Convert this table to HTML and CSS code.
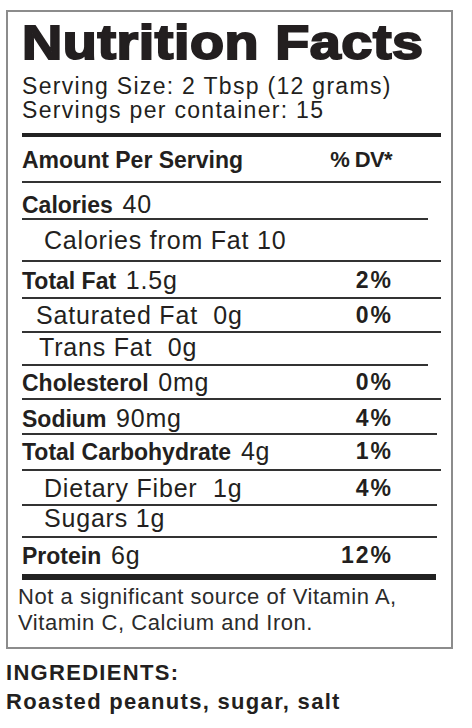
FILE: index.html
```html
<!DOCTYPE html>
<html lang="en">
<head>
  <meta charset="UTF-8" />
  <meta name="viewport" content="width=device-width, initial-scale=1.0"/>
  <title>Nutrition Facts</title>
  <link rel="stylesheet" href="styles.css">
</head>
<body>
<div class="label">
  <h1 class="title">Nutrition Facts</h1>
  <p class="serving">Serving Size: 2 Tbsp (12 grams)</p>
  <p class="serving">Servings per container: 15</p>

  <div class="row head">
    <span class="name">Amount Per Serving</span>
    <span class="dv">% DV*</span>
  </div>
  <div class="row cal short">
    <span><b>Calories</b> 40</span>
  </div>
  <div class="row cff">
    <span class="sub">Calories from Fat 10</span>
  </div>
  <div class="row tf">
    <span><b>Total Fat</b> 1.5g</span>
    <span class="pct">2%</span>
  </div>
  <div class="row sf">
    <span class="sub sub-sat">Saturated Fat&nbsp; 0g</span>
    <span class="pct">0%</span>
  </div>
  <div class="row trans short">
    <span class="sub sub-trans">Trans Fat&nbsp; 0g</span>
  </div>
  <div class="row chol">
    <span><b>Cholesterol</b> 0mg</span>
    <span class="pct">0%</span>
  </div>
  <div class="row sod mid">
    <span><b>Sodium</b> 90mg</span>
    <span class="pct">4%</span>
  </div>
  <div class="row carb">
    <span><b>Total Carbohydrate</b> 4g</span>
    <span class="pct">1%</span>
  </div>
  <div class="row fib mid">
    <span class="sub">Dietary Fiber&nbsp; 1g</span>
    <span class="pct">4%</span>
  </div>
  <div class="row sug mid">
    <span class="sub">Sugars 1g</span>
  </div>
  <div class="row prot">
    <span><b>Protein</b> 6g</span>
    <span class="pct">12%</span>
  </div>

  <p class="note">Not a significant source of Vitamin A,<br>Vitamin C, Calcium and Iron.</p>
</div>

<div class="ingredients">
  <p>INGREDIENTS:</p>
  <p>Roasted peanuts, sugar, salt</p>
</div>
</body>
</html>
```

FILE: styles.css
```css
body { margin: 0; padding: 0; background: white; color: #231f20; font-family: "Liberation Sans", Arial, sans-serif; overflow: hidden; }
p { margin: 0; }

.label { box-sizing: border-box; width: 447px; margin: 10px 0 0 6px; padding: 7px 10px 11px 14px; border: 2px solid #8c8c8c; }

.title { width: fit-content; margin: 0; font-size: 48px; line-height: 48px; font-weight: bold; letter-spacing: 0.5px; -webkit-text-stroke: 2px #231f20; transform: scaleX(1.16); transform-origin: left center; white-space: nowrap; }
.serving { font-size: 23px; line-height: 24px; letter-spacing: 1.3px; }
.title + .serving { margin-top: 7px; }

/* table rows */
.row { box-sizing: border-box; display: flex; justify-content: space-between; align-items: flex-start; font-size: 25px; line-height: 24px; letter-spacing: 0.8px; border-bottom: 2px solid #333; }
.row b { font-size: 23px; letter-spacing: 0; margin-right: 2px; }
.row .pct { font-size: 23px; font-weight: bold; letter-spacing: 2px; padding-right: 48px; }
.row.short { margin-right: 13px; }
.row.short .pct { padding-right: 35px; }
.row.mid { margin-right: 4px; }
.row.mid .pct { padding-right: 44px; }

.head { margin-top: 11px; border-top: 4px solid #222; height: 50px; padding-top: 11px; font-size: 23px; font-weight: bold; letter-spacing: 0; }
.head .dv { font-size: 22px; letter-spacing: -0.6px; padding-right: 49px; }

.sub { padding-left: 22px; }
.sub-sat { padding-left: 14px; }
.sub-trans { padding-left: 17px; }

.cal { height: 37px; padding-top: 9px; }
.cff { height: 42px; padding-top: 8px; }
.tf { height: 37px; padding-top: 6px; }
.sf { height: 34px; padding-top: 4px; }
.trans { height: 33px; padding-top: 2px; }
.chol { height: 34px; padding-top: 4px; }
.sod { height: 35px; padding-top: 6px; }
.carb { height: 36px; padding-top: 4px; }
.fib { height: 35px; padding-top: 5px; }
.sug { height: 32px; padding-top: 0; }
.prot { height: 42px; padding-top: 5px; margin-right: 5px; border-bottom: 6px solid #222; }
.prot .pct { padding-right: 43px; }

.note { margin: 4px 0 0 -4px; font-size: 22px; line-height: 26px; letter-spacing: 0.55px; color: #2b2b2b; }

.ingredients { margin: 9px 0 0 6px; font-size: 22px; line-height: 29px; font-weight: bold; letter-spacing: 1.3px; }
```
